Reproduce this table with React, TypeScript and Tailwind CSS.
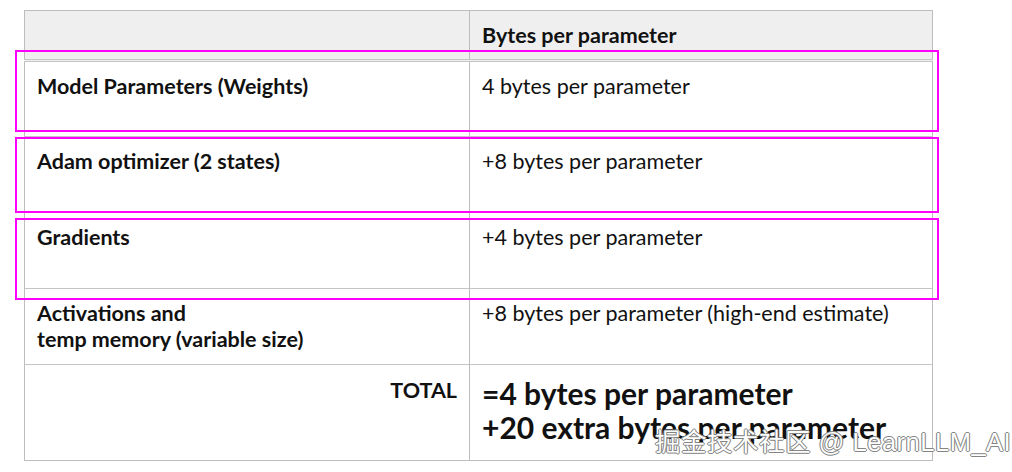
const rows = [
  { label: ["Model Parameters (Weights)"], value: "4 bytes per parameter" },
  { label: ["Adam optimizer (2 states)"], value: "+8 bytes per parameter" },
  { label: ["Gradients"], value: "+4 bytes per parameter" },
  {
    label: ["Activations and", "temp memory (variable size)"],
    value: "+8 bytes per parameter (high-end estimate)",
  },
];

export default function App() {
  return (
    <div
      className="relative w-[1012px] h-[472px] bg-white overflow-hidden text-[#111]"
      style={{ fontFamily: "Lato, 'Noto Sans', sans-serif" }}
    >
      <div className="pt-[10px] pl-[24px]">
        <table className="w-[909px] table-fixed border-collapse border border-[#bdbdbd]">
          <colgroup>
            <col className="w-[445px]" />
            <col />
          </colgroup>
          <thead>
            <tr className="h-[50px] bg-[#efefef] border-b-[3px] border-double border-[#c4c4c4]">
              <th className="border-r border-[#bdbdbd]" />
              <th className="text-left align-middle px-3 pt-[1px] text-[21.5px] font-bold">
                Bytes per parameter
              </th>
            </tr>
          </thead>
          <tbody>
            {rows.map((r, i) => (
              <tr key={i} className="h-[76px] border-b border-[#c4c4c4]">
                <td className="align-top px-3 pt-[11px] text-[21.5px] font-bold leading-[26px] border-r border-[#bdbdbd]">
                  {r.label.map((l) => (
                    <div key={l}>{l}</div>
                  ))}
                </td>
                <td className="align-top px-3 pt-[11px] text-[21.5px] leading-[26px]">
                  {r.value}
                </td>
              </tr>
            ))}
            <tr className="h-[96px]">
              <td className="align-top text-right pr-[12px] pt-[12px] text-[21.5px] font-bold leading-[26px] border-r border-[#bdbdbd]">
                TOTAL
              </td>
              <td className="align-top px-3 pt-[11px] text-[30px] font-bold leading-[34px]">
                <div>=4 bytes per parameter</div>
                <div>+20 extra bytes per parameter</div>
              </td>
            </tr>
          </tbody>
        </table>
      </div>

      {/* highlight boxes */}
      <div className="absolute left-[15px] top-[50px] w-[924px] h-[82px] border-2 border-[#f0f]" />
      <div className="absolute left-[15px] top-[137px] w-[924px] h-[76px] border-2 border-[#f0f]" />
      <div className="absolute left-[15px] top-[218px] w-[924px] h-[82px] border-2 border-[#f0f]" />

      {/* watermark */}
      <div
        className="absolute left-[655px] top-[423px] text-[25.5px] text-white tracking-[0.5px]"
        style={{
          fontFamily: "'Liberation Sans', 'Noto Sans CJK SC', sans-serif",
          textShadow:
            "0 0 1px #666, 1px 0 0 #888, -1px 0 0 #888, 0 1px 0 #888, 0 -1px 0 #888",
        }}
      >
        掘金技术社区 @ LearnLLM_AI
      </div>
    </div>
  );
}
